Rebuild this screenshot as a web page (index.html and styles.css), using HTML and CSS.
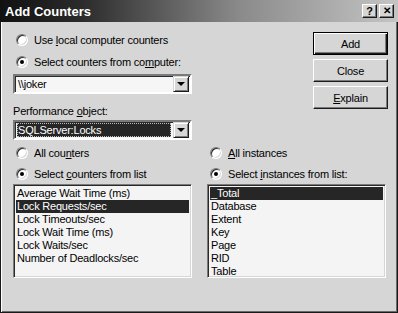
FILE: index.html
```html
<!DOCTYPE html>
<html lang="en">
<head>
    <meta charset="UTF-8">
    <title>Add Counters</title>
    <link rel="stylesheet" href="styles.css">
</head>
<body>
    <div class="window">
        <div class="titlebar">
            <span class="title">Add Counters</span>
            <div class="title-buttons">
                <span class="tbtn">?</span>
                <span class="tbtn tbtn-x">&#x2715;</span>
            </div>
        </div>

        <div class="content">
            <div class="top">
                <div class="left-col">
                    <label class="radio-row"><span class="radio"></span><span>Use <u>l</u>ocal computer counters</span></label>
                    <label class="radio-row"><span class="radio checked"></span><span>Select counters from co<u>m</u>puter:</span></label>
                    <div class="combo">
                        <span class="combo-text">\\joker</span>
                        <span class="arrow-btn"><span class="tri"></span></span>
                    </div>
                    <div class="field-label">Performance <u>o</u>bject:</div>
                    <div class="combo">
                        <span class="combo-text selected">SQLServer:Locks</span>
                        <span class="arrow-btn"><span class="tri"></span></span>
                    </div>
                </div>
                <div class="buttons">
                    <button class="btn default">Add</button>
                    <button class="btn">Close</button>
                    <button class="btn"><u>E</u>xplain</button>
                </div>
            </div>

            <div class="bottom">
                <div class="list-col">
                    <label class="radio-row"><span class="radio"></span><span>All cou<u>n</u>ters</span></label>
                    <label class="radio-row"><span class="radio checked"></span><span>Select <u>c</u>ounters from list</span></label>
                    <ul class="listbox">
                        <li>Average Wait Time (ms)</li>
                        <li class="sel">Lock Requests/sec</li>
                        <li>Lock Timeouts/sec</li>
                        <li>Lock Wait Time (ms)</li>
                        <li>Lock Waits/sec</li>
                        <li>Number of Deadlocks/sec</li>
                    </ul>
                </div>
                <div class="list-col">
                    <label class="radio-row"><span class="radio"></span><span><u>A</u>ll instances</span></label>
                    <label class="radio-row"><span class="radio checked"></span><span>Select <u>i</u>nstances from list:</span></label>
                    <ul class="listbox">
                        <li class="sel">_Total</li>
                        <li>Database</li>
                        <li>Extent</li>
                        <li>Key</li>
                        <li>Page</li>
                        <li>RID</li>
                        <li>Table</li>
                    </ul>
                </div>
            </div>
        </div>
    </div>
</body>
</html>
```

FILE: styles.css
```css
body {
    margin: 0;
    font-family: "Liberation Sans", Arial, sans-serif;
    font-size: 11px;
    letter-spacing: -0.2px;
    color: #000;
    background: #d4d4d4;
}

.window {
    width: 398px;
    height: 313px;
    box-sizing: border-box;
    background: #d6d6d6;
    border: 1px solid #1a1a1a;
    border-top-color: #d6d6d6;
    box-shadow: inset 1px 1px 0 #fff, inset -1px -1px 0 #6a6a6a;
    padding: 2px 3px 3px 3px;
    display: flex;
    flex-direction: column;
}

.titlebar {
    height: 22px;
    display: flex;
    align-items: center;
    justify-content: space-between;
    padding: 0 2px 0 3px;
    margin: -3px -4px 0 -4px;
    background: linear-gradient(to right, #111 0%, #2a2a2a 20%, #8a8a8a 60%, #c4c4c4 100%);
}

.title {
    color: #fff;
    font-weight: bold;
    font-size: 13px;
    letter-spacing: 0;
    padding-left: 2px;
}

.title-buttons {
    display: flex;
    gap: 2px;
    padding-right: 2px;
}

.tbtn {
    width: 15px;
    height: 14px;
    box-sizing: border-box;
    background: #d6d6d6;
    border: 1px solid;
    border-color: #fff #1a1a1a #1a1a1a #fff;
    box-shadow: inset -1px -1px 0 #7a7a7a;
    font-size: 11px;
    font-weight: bold;
    line-height: 12px;
    text-align: center;
    letter-spacing: 0;
}

.tbtn-x {
    font-size: 10px;
}

.content {
    padding: 0 6px 0 9px;
}

.top {
    display: flex;
    justify-content: space-between;
}

.left-col {
    width: 179px;
    display: flex;
    flex-direction: column;
    padding-top: 7px;
}

.radio-row {
    height: 22px;
    display: flex;
    align-items: center;
    gap: 6px;
    padding-left: 3px;
    white-space: nowrap;
}

.radio {
    width: 12px;
    height: 12px;
    box-sizing: border-box;
    border-radius: 50%;
    border: 1px solid;
    border-color: #7a7a7a #fff #fff #7a7a7a;
    background: #fff;
    box-shadow: inset 1px 1px 0 #2a2a2a, inset -1px -1px 0 #d6d6d6;
    position: relative;
    flex: none;
}

.radio.checked::after {
    content: "";
    position: absolute;
    left: 3px;
    top: 3px;
    width: 4px;
    height: 4px;
    border-radius: 50%;
    background: #000;
}

.combo {
    height: 20px;
    box-sizing: border-box;
    display: flex;
    align-items: stretch;
    background: #f6f6f6;
    border: 2px solid;
    border-color: #7a7a7a #fff #fff #7a7a7a;
    box-shadow: inset 1px 1px 0 #2a2a2a;
    padding: 1px 1px 1px 2px;
    margin-top: 1px;
}

.combo-text {
    flex: 1;
    line-height: 14px;
    padding-left: 1px;
}

.combo-text.selected {
    background: #262626;
    color: #fff;
    outline: 1px dotted #bbb;
    outline-offset: -1px;
    margin-right: 2px;
}

.arrow-btn {
    width: 16px;
    box-sizing: border-box;
    background: #d6d6d6;
    border: 1px solid;
    border-color: #d6d6d6 #1a1a1a #1a1a1a #d6d6d6;
    box-shadow: inset 1px 1px 0 #fff, inset -1px -1px 0 #7a7a7a;
    display: flex;
    align-items: center;
    justify-content: center;
    margin: -1px 0;
}

.tri {
    width: 0;
    height: 0;
    border-left: 4px solid transparent;
    border-right: 4px solid transparent;
    border-top: 4px solid #000;
}

.field-label {
    margin-top: 10px;
    height: 14px;
    line-height: 14px;
}

.field-label + .combo {
    margin-top: 2px;
}

.buttons {
    display: flex;
    flex-direction: column;
    gap: 4px;
    padding-top: 10px;
}

.btn {
    width: 75px;
    height: 23px;
    font-family: inherit;
    font-size: 11px;
    letter-spacing: -0.2px;
    background: #d6d6d6;
    border: 1px solid;
    border-color: #fff #1a1a1a #1a1a1a #fff;
    box-shadow: inset -1px -1px 0 #7a7a7a;
    padding: 0;
    color: #000;
}

.btn.default {
    border: 1px solid #000;
    box-shadow: inset 1px 1px 0 #fff, inset -1px -1px 0 #1a1a1a, inset -2px -2px 0 #7a7a7a;
}

.bottom {
    display: grid;
    grid-template-columns: 179px 179px;
    column-gap: 15px;
    margin-top: 2px;
}

.list-col {
    display: flex;
    flex-direction: column;
}

.list-col .radio-row {
    height: 21px;
}

.listbox {
    list-style: none;
    margin: 0;
    height: 94px;
    box-sizing: border-box;
    padding: 2px 2px;
    background: #f4f4f4;
    border: 1px solid;
    border-color: #7a7a7a #fff #fff #7a7a7a;
    box-shadow: inset 1px 1px 0 #2a2a2a, inset -1px -1px 0 #d6d6d6;
}

.listbox li {
    height: 13px;
    line-height: 13px;
    padding-left: 1px;
    white-space: nowrap;
}

.listbox li.sel {
    background: #262626;
    color: #fff;
}
```
